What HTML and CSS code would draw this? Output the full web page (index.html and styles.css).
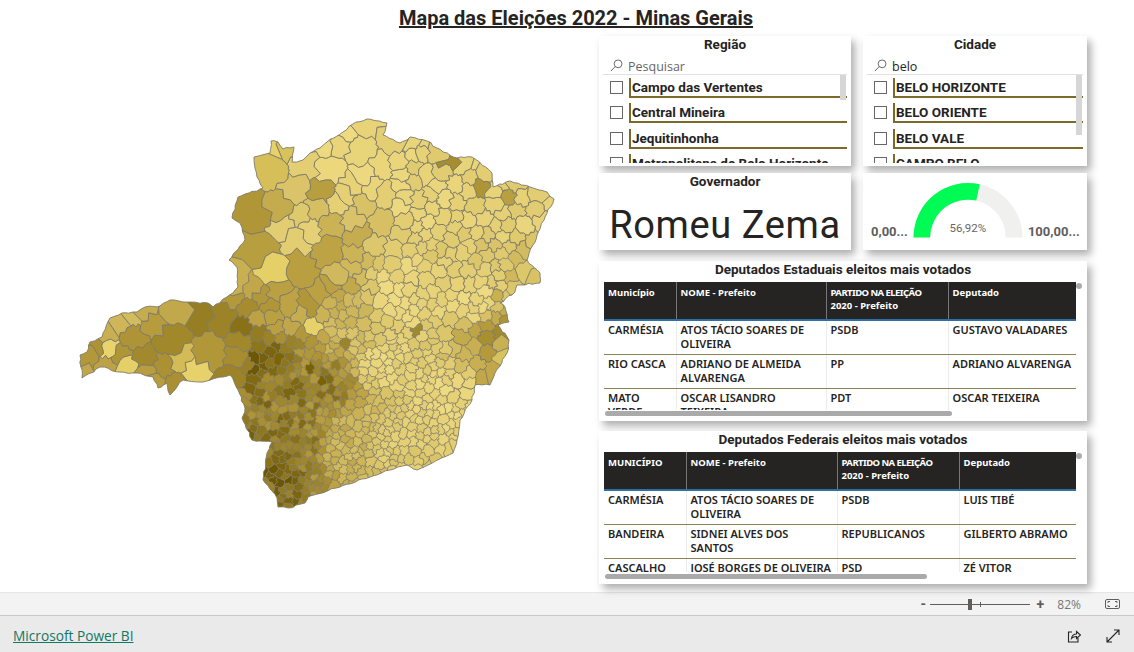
FILE: index.html
```html
<!DOCTYPE html>
<html lang="pt-BR">
<head>
    <meta charset="UTF-8">
    <meta name="viewport" content="width=device-width, initial-scale=1.0">
    <title>Mapa das Eleições 2022 - Minas Gerais</title>
    <link rel="stylesheet" href="styles.css">
</head>
<body>
    <div class="report">
        <h1 class="report-title">Mapa das Eleições 2022 - Minas Gerais</h1>
        <div class="report-body">
            <div class="map-area">
                <svg id="map" class="map" viewBox="0 36 599 556" aria-label="Mapa de Minas Gerais"></svg>
            </div>

            <div class="visuals">
                <div class="card slicer">
                    <h2 class="card-title">Região</h2>
                    <div class="search">
                        <svg class="search-icon" viewBox="0 0 14 14"><circle cx="8.7" cy="5.2" r="4.2"/><path d="M5.6 8.2 1 13"/></svg>
                        <span class="search-text placeholder">Pesquisar</span>
                    </div>
                    <div class="slicer-list">
                        <div class="slicer-item"><span class="checkbox"></span><span class="item-label">Campo das Vertentes</span></div>
                        <div class="slicer-item"><span class="checkbox"></span><span class="item-label">Central Mineira</span></div>
                        <div class="slicer-item"><span class="checkbox"></span><span class="item-label">Jequitinhonha</span></div>
                        <div class="slicer-item"><span class="checkbox"></span><span class="item-label">Metropolitana de Belo Horizonte</span></div>
                        <div class="slicer-thumb thumb-short"></div>
                    </div>
                </div>

                <div class="card slicer">
                    <h2 class="card-title">Cidade</h2>
                    <div class="search">
                        <svg class="search-icon" viewBox="0 0 14 14"><circle cx="8.7" cy="5.2" r="4.2"/><path d="M5.6 8.2 1 13"/></svg>
                        <span class="search-text">belo</span>
                    </div>
                    <div class="slicer-list">
                        <div class="slicer-item"><span class="checkbox"></span><span class="item-label">BELO HORIZONTE</span></div>
                        <div class="slicer-item"><span class="checkbox"></span><span class="item-label">BELO ORIENTE</span></div>
                        <div class="slicer-item"><span class="checkbox"></span><span class="item-label">BELO VALE</span></div>
                        <div class="slicer-item"><span class="checkbox"></span><span class="item-label">CAMPO BELO</span></div>
                        <div class="slicer-thumb thumb-long"></div>
                    </div>
                </div>

                <div class="card governor">
                    <h2 class="card-title">Governador</h2>
                    <div class="governor-name">Romeu Zema</div>
                </div>

                <div class="card gauge">
                    <span class="gauge-limit">0,00...</span>
                    <div class="gauge-dial">
                        <svg viewBox="0 0 110 56" width="110" height="56">
                            <path class="gauge-track" d="M0.5 55.5A54.5 54.5 0 0 1 109.5 55.5H92.8A37.8 37.8 0 0 0 17.2 55.5Z"/>
                            <path class="gauge-fill" d="M0.5 55.5A54.5 54.5 0 0 1 66.8 2.3L63.2 18.6A37.8 37.8 0 0 0 17.2 55.5Z"/>
                        </svg>
                        <span class="gauge-value">56,92%</span>
                    </div>
                    <span class="gauge-limit">100,00...</span>
                </div>

                <div class="card data-card state-card">
                    <h2 class="card-title">Deputados Estaduais eleitos mais votados</h2>
                    <div class="table-clip">
                        <table class="data-table">
                            <colgroup><col class="st-a"><col class="st-b"><col class="st-c"><col></colgroup>
                            <thead>
                                <tr><th>Município</th><th>NOME - Prefeito</th><th><span class="caps-tight">PARTIDO NA ELEIÇÃO</span> 2020 - Prefeito</th><th>Deputado</th></tr>
                            </thead>
                            <tbody>
                                <tr><td>CARMÉSIA</td><td>ATOS TÁCIO SOARES DE OLIVEIRA</td><td>PSDB</td><td>GUSTAVO VALADARES</td></tr>
                                <tr><td>RIO CASCA</td><td>ADRIANO DE ALMEIDA ALVARENGA</td><td>PP</td><td>ADRIANO ALVARENGA</td></tr>
                                <tr><td>MATO VERDE</td><td>OSCAR LISANDRO TEIXEIRA</td><td>PDT</td><td>OSCAR TEIXEIRA</td></tr>
                            </tbody>
                        </table>
                    </div>
                    <div class="scroll-dot"></div>
                    <div class="scroll-bar state-bar"></div>
                </div>

                <div class="card data-card federal-card">
                    <h2 class="card-title">Deputados Federais eleitos mais votados</h2>
                    <div class="table-clip">
                        <table class="data-table">
                            <colgroup><col class="fd-a"><col class="fd-b"><col class="fd-c"><col></colgroup>
                            <thead>
                                <tr><th>MUNICÍPIO</th><th>NOME - Prefeito</th><th><span class="caps-tight">PARTIDO NA ELEIÇÃO</span> 2020 - Prefeito</th><th>Deputado</th></tr>
                            </thead>
                            <tbody>
                                <tr><td>CARMÉSIA</td><td>ATOS TÁCIO SOARES DE OLIVEIRA</td><td>PSDB</td><td>LUIS TIBÉ</td></tr>
                                <tr><td>BANDEIRA</td><td>SIDNEI ALVES DOS SANTOS</td><td>REPUBLICANOS</td><td>GILBERTO ABRAMO</td></tr>
                                <tr><td>CASCALHO</td><td class="one-line">JOSÉ BORGES DE OLIVEIRA</td><td>PSD</td><td>ZÉ VITOR</td></tr>
                            </tbody>
                        </table>
                    </div>
                    <div class="scroll-dot"></div>
                    <div class="scroll-bar federal-bar"></div>
                </div>
            </div>
        </div>
    </div>

    <div class="zoom-bar">
        <span class="zoom-sign">-</span>
        <div class="zoom-slider"><span class="zoom-tick"></span><span class="zoom-thumb"></span></div>
        <span class="zoom-sign">+</span>
        <span class="zoom-value">82%</span>
        <svg class="fit-icon" viewBox="0 0 15 10"><rect x="0.5" y="0.5" width="14" height="9" rx="1.5"/><path d="M3 4V2.5H5M10 2.5H12V4M12 6V7.5H10M5 7.5H3V6"/></svg>
    </div>

    <div class="footer">
        <a class="footer-link" href="#">Microsoft Power BI</a>
        <div class="footer-icons">
            <svg class="footer-icon" viewBox="0 0 14 14"><path d="M5 3H1.5V13H11V9"/><path d="M4.5 9.5C5 6.5 7 5 9.5 5V2.5L13.5 6L9.5 9.5V7.5C7.5 7.5 5.8 8 4.5 9.5Z"/></svg>
            <svg class="footer-icon" viewBox="0 0 14 14"><path d="M1 13 13 1M8 1H13V6M1 8V13H6"/></svg>
        </div>
    </div>

    <script src="map.js"></script>
</body>
</html>
```

FILE: styles.css
```css
* {
    box-sizing: border-box;
}
html, body {
    margin: 0;
    padding: 0;
    height: 652px;
    overflow: hidden;
}
body {
    display: flex;
    flex-direction: column;
    background-color: #fff;
    color: #252423;
    font-family: 'Roboto', 'Liberation Sans', sans-serif;
}

/* Relatorio */
.report {
    height: 592px;
    flex: none;
}
.report-title {
    margin: 0;
    height: 36px;
    padding-left: 18px;
    text-align: center;
    font-size: 20px;
    line-height: 36px;
    font-weight: 700;
    text-decoration: underline;
}
.report-body {
    display: flex;
    height: 556px;
}
.map-area {
    width: 599px;
    flex: none;
}
.map {
    display: block;
    width: 599px;
    height: 556px;
    filter: blur(0.3px);
}
.map path {
    stroke: #7f7a66;
    stroke-width: 0.9;
    stroke-linejoin: round;
}
.map path.small-cell {
    stroke-width: 0.65;
}

/* Cartoes */
.visuals {
    display: grid;
    grid-template-columns: 252px 224px;
    grid-template-rows: 130px 77px 164px 156px;
    column-gap: 12px;
    row-gap: 7px;
}
.card {
    position: relative;
    background-color: #fff;
    box-shadow: 4px 5px 8px rgba(0, 0, 0, 0.32);
    overflow: hidden;
}
.card-title {
    margin: 0;
    text-align: center;
    font-size: 13.5px;
    line-height: 17px;
    font-weight: 700;
}

/* Segmentacoes */
.slicer {
    padding: 0 4px;
}
.search {
    display: flex;
    align-items: center;
    height: 18px;
    margin-top: 4px;
    padding-left: 7px;
    border-bottom: 1px solid #e1e1e1;
}
.search-icon {
    width: 13px;
    height: 13px;
    flex: none;
    fill: none;
    stroke: #605e5c;
    stroke-width: 1;
}
.search-text {
    margin: 1px 0 0 5px;
    font-family: 'Open Sans', sans-serif;
    font-size: 12.5px;
    color: #252423;
}
.placeholder {
    color: #666;
}
.slicer-list {
    position: relative;
    height: 88px;
    overflow: hidden;
}
.slicer-item {
    display: flex;
    align-items: flex-start;
    height: 25.5px;
    padding: 2.8px 0 0 7px;
}
.checkbox {
    width: 13px;
    height: 13px;
    flex: none;
    margin-top: 3px;
    border: 1px solid #666;
}
.item-label {
    flex: 1;
    height: 20px;
    margin-left: 6px;
    padding-left: 1px;
    border-left: 2px solid #7d6a2a;
    border-bottom: 2px solid #7d6a2a;
    font-size: 13.5px;
    line-height: 18px;
    font-weight: 700;
    white-space: nowrap;
}
.slicer-thumb {
    position: absolute;
    top: 0;
    right: 1px;
    width: 6px;
    background-color: #d6d6d6;
}
.thumb-short {
    height: 25px;
}
.thumb-long {
    height: 60px;
}

/* Governador */
.governor-name {
    text-align: center;
    font-size: 38px;
    line-height: 50px;
    margin-top: 10px;
    letter-spacing: 0.6px;
}

/* Medidor */
.gauge {
    display: flex;
    align-items: flex-end;
    padding: 0 0 10px 8px;
}
.gauge-limit {
    font-size: 13px;
    font-weight: 700;
    line-height: 16px;
    color: #605e5c;
    white-space: nowrap;
}
.gauge-dial {
    position: relative;
    width: 110px;
    height: 56px;
    margin: 0 5px 2px 5px;
    flex: none;
}
.gauge-dial svg {
    display: block;
}
.gauge-track {
    fill: #f0f0ee;
}
.gauge-fill {
    fill: #00fb54;
}
.gauge-value {
    position: absolute;
    left: 0;
    right: 0;
    bottom: 3px;
    text-align: center;
    font-size: 11.5px;
    color: #666;
}

/* Tabelas */
.data-card {
    grid-column: 1 / span 2;
    margin-top: 4px;
    padding: 0 5px;
}
.federal-card {
    margin-top: 3px;
}
.table-clip {
    width: 472px;
    margin-top: 4px;
    overflow: hidden;
}
.state-card .table-clip {
    height: 128px;
}
.federal-card .table-clip {
    height: 120px;
}
.data-table {
    width: 472px;
    table-layout: fixed;
    border-collapse: collapse;
    font-family: 'Noto Sans', 'Open Sans', sans-serif;
    font-size: 11px;
    font-weight: 600;
    line-height: 14px;
}
.st-a { width: 72px; }
.st-b { width: 150px; }
.st-c { width: 122px; }
.fd-a { width: 82px; }
.fd-b { width: 151px; }
.fd-c { width: 122px; }
.data-table th {
    height: 38px;
    padding: 4px 4px 0;
    vertical-align: top;
    text-align: left;
    background-color: #252423;
    color: #fff;
    font-size: 9.5px;
    font-weight: 700;
    line-height: 13px;
    border-left: 1px solid #777;
    border-bottom: 2px solid #2f6fa8;
}
.data-table td {
    height: 34px;
    padding: 2px 0 0 4px;
    vertical-align: top;
    border-left: 1px solid #ececec;
    border-bottom: 1px solid #8f8250;
}
.data-table td:nth-child(2) {
    padding-right: 6px;
}
.data-table td:first-child {
    padding-right: 4px;
}
.data-table th:first-child, .data-table td:first-child {
    border-left: none;
}
.data-table td.one-line {
    padding-right: 0;
    white-space: nowrap;
}
.caps-tight {
    letter-spacing: -0.55px;
}
.scroll-dot {
    position: absolute;
    top: 22px;
    left: 477px;
    width: 6px;
    height: 6px;
    border-radius: 3px;
    background-color: #aaa;
}
.scroll-bar {
    position: absolute;
    left: 6px;
    height: 5px;
    border-radius: 3px;
    background-color: #aaa;
}
.state-bar {
    bottom: 5px;
    width: 347px;
}
.federal-bar {
    bottom: 5px;
    width: 322px;
}

/* Barras inferiores */
.zoom-bar {
    display: flex;
    align-items: center;
    height: 24px;
    flex: none;
    padding-right: 14px;
    justify-content: flex-end;
    background-color: #f3f3f3;
    border-top: 1px solid #e6e6e6;
    border-bottom: 1px solid #c8c8c8;
    color: #605e5c;
}
.zoom-sign {
    width: 8px;
    text-align: center;
    font-size: 14px;
    font-weight: 700;
    line-height: 14px;
}
.zoom-slider {
    position: relative;
    width: 100px;
    height: 1px;
    margin: 0 6px 0 3px;
    background-color: #605e5c;
}
.zoom-thumb {
    position: absolute;
    left: 38px;
    top: -5px;
    width: 4px;
    height: 11px;
    background-color: #605e5c;
}
.zoom-tick {
    position: absolute;
    left: 50px;
    top: -2px;
    width: 1px;
    height: 5px;
    background-color: #605e5c;
}
.zoom-value {
    margin-left: 13px;
    font-family: 'Open Sans', sans-serif;
    font-size: 12px;
    color: #777;
}
.fit-icon {
    width: 15px;
    height: 10px;
    margin-left: 24px;
    fill: none;
    stroke: #605e5c;
    stroke-width: 1;
}
.footer {
    display: flex;
    align-items: center;
    justify-content: space-between;
    flex: 1;
    padding: 3px 14px 0 13px;
    background-color: #eaeaea;
}
.footer-link {
    font-family: 'Open Sans', sans-serif;
    font-size: 13.7px;
    color: #117865;
}
.footer-icons {
    display: flex;
    gap: 25px;
}
.footer-icon {
    width: 14px;
    height: 14px;
    fill: none;
    stroke: #252423;
    stroke-width: 1.1;
}
```

FILE: map.js
```js
// Contorno do estado, em coordenadas da tela
const outlineBase = [
    [271,141],[278,142],[283,149],[294,147],[292,162],[303,160],[310,153],[320,148],[327,142],[343,132],
    [353,124],[367,119],[387,123],[383,135],[400,143],[410,137],[427,141],[443,152],[457,158],[472,157],
    [492,173],[493,187],[510,181],[530,187],[547,192],[554,199],[545,217],[537,235],[527,260],[540,273],
    [540,283],[517,285],[515,292],[500,303],[505,307],[509,322],[498,325],[509,340],[507,353],[495,373],
    [490,385],[475,385],[472,400],[460,420],[457,440],[453,453],[417,470],[407,465],[390,470],[370,477],
    [340,487],[308,497],[305,503],[288,508],[278,507],[277,498],[263,480],[267,453],[272,442],[252,440],
    [242,418],[245,408],[238,390],[230,375],[223,377],[203,382],[183,380],[170,395],[167,383],[158,388],
    [153,377],[137,373],[120,372],[100,367],[82,378],[80,355],[87,352],[90,342],[102,337],[110,318],
    [122,313],[137,312],[145,307],[157,307],[170,300],[183,302],[208,303],[213,307],[233,293],[238,287],
    [237,267],[229,260],[245,240],[240,223],[232,218],[238,197],[263,188],[257,177],[254,157],[270,153]
];

// Municipios colocados a mao: x, y, raio
const fixedSeeds = [
    [257,212,38],[262,252,38],[302,268,32],[330,252,24],[382,222,24],[270,170,24],[295,190,22],
    [170,340,28],[210,353,28],[200,312,22],[132,337,18],[225,318,18],[330,170,24],[360,150,22],
    [109,348,11],[128,366,12],[193,372,11],[180,361,10],[88,362,15],[95,345,10],[120,325,14],[155,322,14],
    [285,225,11],[300,218,11],[297,238,11],[280,208,11],[272,273,9],[525,272,16]
];

// Escuridao de cada zona (0 = claro, 1 = escuro)
const shadeAnchors = [
    [330,160,.02],[430,200,.06],[520,220,.08],[480,300,.03],[400,300,.03],[450,400,.03],[400,440,.12],
    [345,445,.3],[270,470,.85],[300,440,.68],[280,400,.72],[330,380,.68],[260,360,.78],[225,340,.66],
    [195,340,.55],[150,345,.52],[100,360,.52],[125,322,.3],[165,312,.36],[200,312,.58],[132,337,.52],
    [257,212,.62],[262,252,.66],[302,268,.48],[235,275,.45],[270,170,.2],[290,225,.08],[330,300,.36],
    [355,340,.25],[375,360,.04],[290,310,.45],[498,345,.45],[505,330,.5],[525,272,.22]
];

// Municipios com cor propria (vale o mais perto do ponto)
const overrides = [
    [252,358,"#6e5700"],[257,370,"#6e5700"],[277,364,"#7f6500"],[323,380,"#7b6200"],[312,372,"#7b6200"],
    [109,348,"#e8d36c"],[128,366,"#e5d067"],[193,372,"#e6d16a"],[180,361,"#d4bb55"],[272,273,"#e5d067"],
    [450,166,"#a68e30"],[325,198,"#b79f40"],[480,188,"#ad9435"],[495,335,"#a08a2c"],[490,345,"#a88f30"],
    [412,331,"#9f8a30"],[310,330,"#e6d16a"],[347,344,"#9c8428"],[508,205,"#b8a040"],[270,236,"#b79f40"],
    [305,145,"#d8c25c"],[265,158,"#d6bf58"],[280,140,"#e6d16a"],[500,360,"#d8c25c"],[495,300,"#c9b24e"]
];

const ramp = [[238,218,128],[181,154,59],[107,85,0]];

let seed = 20221002;
function random() {
    seed = (seed + 0x6D2B79F5) | 0;
    let t = Math.imul(seed ^ (seed >>> 15), 1 | seed);
    t = (t + Math.imul(t ^ (t >>> 7), 61 | t)) ^ t;
    return ((t ^ (t >>> 14)) >>> 0) / 4294967296;
}

function hash(text) {
    let h = 2166136261;
    for (let i = 0; i < text.length; i++) {
        h = Math.imul(h ^ text.charCodeAt(i), 16777619);
    }
    h = Math.imul(h ^ (h >>> 13), 1540483477);
    return (((h ^ (h >>> 15)) >>> 0) % 1000) / 1000;
}

// Borda com serrilhado fino
const outline = [];
outlineBase.forEach((a, i) => {
    const b = outlineBase[(i + 1) % outlineBase.length];
    const steps = Math.max(1, Math.round(Math.hypot(b[0] - a[0], b[1] - a[1]) / 4));
    for (let s = 0; s < steps; s++) {
        const f = s / steps;
        const jitter = s === 0 ? 0 : 1.8;
        outline.push([
            a[0] + (b[0] - a[0]) * f + (random() - 0.5) * jitter,
            a[1] + (b[1] - a[1]) * f + (random() - 0.5) * jitter
        ]);
    }
});

function inside(x, y) {
    let result = false;
    for (let i = 0, j = outlineBase.length - 1; i < outlineBase.length; j = i++) {
        const a = outlineBase[i], b = outlineBase[j];
        if ((a[1] > y) !== (b[1] > y) && x < (b[0] - a[0]) * (y - a[1]) / (b[1] - a[1]) + a[0]) {
            result = !result;
        }
    }
    return result;
}

// Municipios menores no sul e no sudeste
function radiusAt(x, y) {
    if (y > 400) return 6;
    if (y > 335) return x < 240 ? 16 : (x > 450 ? 9 : 7);
    if (y > 290) return x < 235 ? 18 : (x < 330 ? 12 : 9);
    if (y > 245) return 11;
    return x > 400 ? 12 : 15;
}

const points = fixedSeeds.map(s => ({ x: s[0], y: s[1], r: s[2] }));
for (let i = 0; i < 60000; i++) {
    const x = 75 + random() * 485;
    const y = 115 + random() * 395;
    if (!inside(x, y)) continue;
    const r = radiusAt(x, y) * (0.75 + random() * random() * 0.9);
    if (points.every(p => Math.hypot(p.x - x, p.y - y) > Math.max(r, p.r))) {
        points.push({ x, y, r });
    }
}

for (const o of overrides) {
    let best = points[0];
    for (const p of points) {
        if (Math.hypot(o[0] - p.x, o[1] - p.y) < Math.hypot(o[0] - best.x, o[1] - best.y)) best = p;
    }
    best.color = o[2];
}

// Celula de Voronoi: corta a caixa pelas mediatrizes dos vizinhos
function cellFor(p) {
    let poly = [[60,100],[580,100],[580,520],[60,520]];
    const others = points.filter(q => q !== p)
        .map(q => ({ q, d: Math.hypot(q.x - p.x, q.y - p.y) }))
        .sort((a, b) => a.d - b.d);
    for (const { q, d } of others) {
        const reach = Math.max(...poly.map(v => Math.hypot(v[0] - p.x, v[1] - p.y)));
        if (d > reach * 2) break;
        const mx = (p.x + q.x) / 2, my = (p.y + q.y) / 2;
        const nx = q.x - p.x, ny = q.y - p.y;
        const next = [];
        for (let i = 0; i < poly.length; i++) {
            const a = poly[i], b = poly[(i + 1) % poly.length];
            const da = (a[0] - mx) * nx + (a[1] - my) * ny;
            const db = (b[0] - mx) * nx + (b[1] - my) * ny;
            if (da <= 0) next.push(a);
            if ((da < 0 && db > 0) || (da > 0 && db < 0)) {
                const t = da / (da - db);
                next.push([a[0] + (b[0] - a[0]) * t, a[1] + (b[1] - a[1]) * t]);
            }
        }
        poly = next;
    }
    return poly;
}

// Ondula cada aresta, igual dos dois lados
function wiggle(a, b) {
    const ka = a[0].toFixed(1) + "," + a[1].toFixed(1);
    const kb = b[0].toFixed(1) + "," + b[1].toFixed(1);
    const flip = ka > kb;
    const p = flip ? b : a, q = flip ? a : b;
    const key = flip ? kb + "|" + ka : ka + "|" + kb;
    const dx = q[0] - p[0], dy = q[1] - p[1];
    const mids = [0.25, 0.5, 0.75].map((f, i) => {
        const o = (hash(key + i) - 0.5) * 0.42;
        return [p[0] + dx * f - dy * o, p[1] + dy * f + dx * o];
    });
    return flip ? mids.reverse() : mids;
}

function shadeAt(x, y) {
    let sum = 0, weight = 0;
    for (const a of shadeAnchors) {
        const w = 1 / (Math.pow(a[0] - x, 2) + Math.pow(a[1] - y, 2) + 40);
        sum += a[2] * w * w;
        weight += w * w;
    }
    return sum / weight;
}

function colorFor(p) {
    if (p.color) return p.color;
    const base = shadeAt(p.x, p.y);
    const spread = 0.04 + base * 0.2;
    const t = Math.min(1, Math.max(0, base + (random() - 0.5) * 2 * spread));
    const i = t < 0.5 ? 0 : 1, f = t < 0.5 ? t * 2 : t * 2 - 1;
    const c = ramp[i].map((v, n) => Math.round(v + (ramp[i + 1][n] - v) * f));
    return `rgb(${c[0]},${c[1]},${c[2]})`;
}

const NS = "http://www.w3.org/2000/svg";
const map = document.getElementById("map");
const outlinePath = "M" + outline.map(v => v[0].toFixed(1) + " " + v[1].toFixed(1)).join("L") + "Z";

const defs = document.createElementNS(NS, "defs");
const clip = document.createElementNS(NS, "clipPath");
clip.setAttribute("id", "state-clip");
const clipShape = document.createElementNS(NS, "path");
clipShape.setAttribute("d", outlinePath);
clip.appendChild(clipShape);
defs.appendChild(clip);
map.appendChild(defs);

const cells = document.createElementNS(NS, "g");
cells.setAttribute("clip-path", "url(#state-clip)");
for (const p of points) {
    const poly = cellFor(p);
    if (poly.length < 3) continue;
    let d = "";
    poly.forEach((v, i) => {
        const w = poly[(i + 1) % poly.length];
        d += (i ? "L" : "M") + v[0].toFixed(1) + " " + v[1].toFixed(1);
        for (const m of wiggle(v, w)) {
            d += "L" + m[0].toFixed(1) + " " + m[1].toFixed(1);
        }
    });
    const path = document.createElementNS(NS, "path");
    path.setAttribute("d", d + "Z");
    path.setAttribute("fill", colorFor(p));
    if (p.r < 9) path.setAttribute("class", "small-cell");
    cells.appendChild(path);
}
map.appendChild(cells);

const border = document.createElementNS(NS, "path");
border.setAttribute("d", outlinePath);
border.setAttribute("fill", "none");
map.appendChild(border);
```
